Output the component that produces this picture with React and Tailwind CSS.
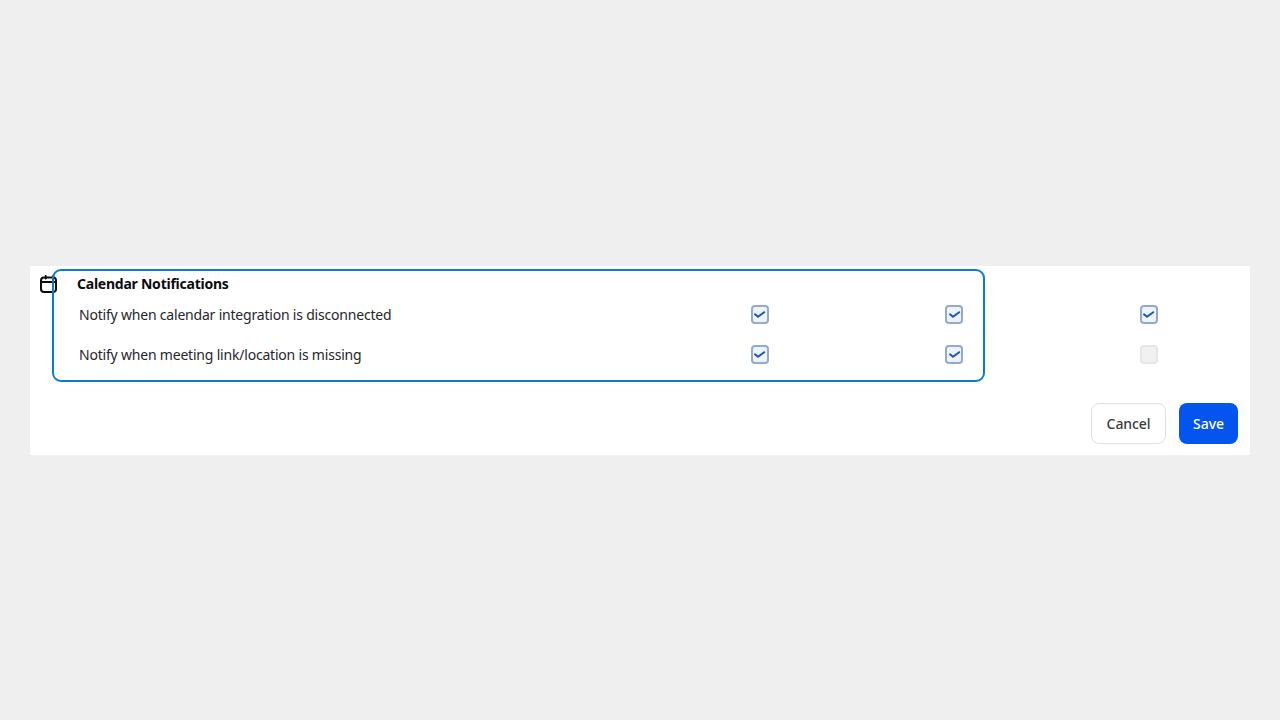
import React from 'react';

const rows = [
  { label: 'Notify when calendar integration is disconnected', checks: [true, true, true] },
  { label: 'Notify when meeting link/location is missing', checks: [true, true, false] }
];

const Checkbox = ({ checked }) =>
  checked ? (
    <span className="mb-[1px] flex h-[19px] w-[18px] items-center justify-center rounded-[4px] border-2 border-[#94a9cc] bg-[#eef3fb]">
      <svg width="13" height="13" viewBox="0 0 13 13" fill="none">
        <path d="M2 6.3 L5 8.8 L11.2 4.2" stroke="#1d56b8" strokeWidth="2" strokeLinecap="round" strokeLinejoin="miter" />
      </svg>
    </span>
  ) : (
    <span className="mb-[1px] block h-[19px] w-[18px] rounded-[4px] border-2 border-[#e6e6e8] bg-[#f1f1f2]"></span>
  );

const CalendarIcon = () => (
  <svg width="18" height="20" viewBox="0 0 18 20" fill="none" stroke="#0c0c10" strokeWidth="2" strokeLinecap="round" strokeLinejoin="round">
    <rect x="2" y="3.5" width="15" height="14.5" rx="3" />
    <path d="M2 8 H17" />
    <path d="M6.7 2 V4.5" />
    <path d="M14.3 2 V4.5" />
  </svg>
);

const App = () => {
  return (
    <div className="flex h-[720px] w-[1280px] items-start bg-[#efefef] px-[30px] pt-[266px] font-['Noto_Sans','Open_Sans',sans-serif]">
      <div className="relative h-[189px] w-[1220px] bg-white">
        {/* Section header */}
        <div className="flex items-center pl-[9px] pt-[8px]">
          <CalendarIcon />
          <h2 className="ml-[20px] text-[14px] font-bold leading-[20px] tracking-[-0.24px] text-[#0b0b0f]">Calendar Notifications</h2>
        </div>

        {/* Permission rows */}
        <div className="mt-[11px] flex flex-col gap-[20px] pr-[4px]">
          {rows.map(row => (
            <div key={row.label} className="flex h-[20px] items-center pl-[49px]">
              <span className="flex-1 text-[14px] leading-[20px] tracking-[-0.2px] text-[#26262a]">{row.label}</span>
              {row.checks.map((checked, i) => (
                <span key={i} className="flex w-[194.5px] justify-center">
                  <Checkbox checked={checked} />
                </span>
              ))}
            </div>
          ))}
        </div>

        {/* Highlight frame */}
        <div className="pointer-events-none absolute left-[22px] top-[3px] h-[113px] w-[933px] rounded-[9px] border-2 border-[#0a7ccf]"></div>

        {/* Actions */}
        <div className="mt-[38px] flex justify-end gap-[13px] pr-[12px]">
          <button className="h-[41px] w-[75px] rounded-[8px] border border-[#e0e0e0] bg-white text-[14px] font-medium tracking-[-0.1px] text-[#3a3a40]">Cancel</button>
          <button className="h-[41px] w-[59px] rounded-[8px] bg-[#0455f0] text-[14px] font-medium text-white">Save</button>
        </div>
      </div>
    </div>
  );
};

export default App;
